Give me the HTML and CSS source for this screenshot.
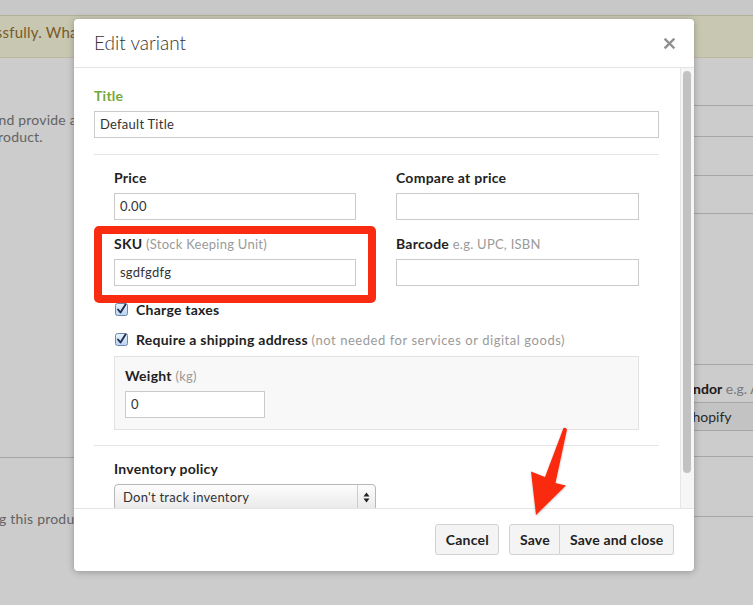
FILE: index.html
```html
<!DOCTYPE html>
<html lang="en">
<head>
<meta charset="utf-8">
<title>Edit variant</title>
<link rel="stylesheet" href="styles.css">
</head>
<body>
<div class="page">
  <div class="topstrip"></div>
  <div class="flash"><span class="flash-text">Your product was saved successfully. What's next?</span></div>
  <div class="layout">
    <div class="main">
      <div class="main-block">
        <p class="intro"><span class="intro-l1">Give your product a title and provide a</span><span class="intro-l2">product.</span></p>
      </div>
      <div class="main-block second">
        <p class="intro"><span class="intro-l3">Stop selling this product</span></p>
      </div>
    </div>
    <div class="sidebar">
      <div class="side-row h48"></div>
      <div class="side-row h30"></div>
      <div class="side-row h38"></div>
      <div class="side-row h37"></div>
      <div class="side-row h150"></div>
      <div class="side-row vendor">
        <div class="side-label"><b>Vendor</b> <span class="side-hint">e.g. Apple</span></div>
        <div class="side-input">Shopify</div>
      </div>
      <div class="side-row h59"></div>
    </div>
  </div>
</div>

<div class="backdrop"></div>

<div class="modal">
  <div class="modal-header">
    <h2 class="modal-title">Edit variant</h2>
    <span class="close" aria-label="Close">
      <svg width="11" height="11" viewBox="0 0 11 11"><path d="M1.5 1.5 L9.5 9.5 M9.5 1.5 L1.5 9.5" stroke="#8f8f8f" stroke-width="2.4" stroke-linecap="square"/></svg>
    </span>
  </div>
  <div class="modal-body">
    <div class="modal-content">
      <div class="field">
        <label class="label green">Title</label>
        <div class="input">Default Title</div>
      </div>
      <hr class="rule first">
      <div class="section">
        <div class="grid">
          <div class="field">
            <label class="label">Price</label>
            <div class="input">0.00</div>
          </div>
          <div class="field">
            <label class="label">Compare at price</label>
            <div class="input"></div>
          </div>
          <div class="field marked">
            <label class="label">SKU <span class="hint">(Stock Keeping Unit)</span></label>
            <div class="input">sgdfgdfg</div>
            <span class="mark"></span>
          </div>
          <div class="field">
            <label class="label">Barcode <span class="hint">e.g. UPC, ISBN</span></label>
            <div class="input"></div>
          </div>
        </div>
        <div class="check-row first">
          <svg class="checkbox" width="13" height="13" viewBox="0 0 13 13"><defs><linearGradient id="cb1" x1="0" y1="0" x2="0" y2="1"><stop offset="0" stop-color="#e9f2fd"/><stop offset="1" stop-color="#b9d3f2"/></linearGradient></defs><rect x="0.5" y="0.5" width="12" height="12" rx="2" fill="url(#cb1)" stroke="#6f88a8"/><path d="M3 6.5 L5.5 9.5 L10.5 1.5" fill="none" stroke="#1f2f4d" stroke-width="1.9" stroke-linecap="round" stroke-linejoin="round"/></svg>
          <span class="check-text">Charge taxes</span>
        </div>
        <div class="check-row">
          <svg class="checkbox" width="13" height="13" viewBox="0 0 13 13"><defs><linearGradient id="cb2" x1="0" y1="0" x2="0" y2="1"><stop offset="0" stop-color="#e9f2fd"/><stop offset="1" stop-color="#b9d3f2"/></linearGradient></defs><rect x="0.5" y="0.5" width="12" height="12" rx="2" fill="url(#cb2)" stroke="#6f88a8"/><path d="M3 6.5 L5.5 9.5 L10.5 1.5" fill="none" stroke="#1f2f4d" stroke-width="1.9" stroke-linecap="round" stroke-linejoin="round"/></svg>
          <span class="check-text">Require a shipping address <span class="hint wide">(not needed for services or digital goods)</span></span>
        </div>
        <div class="weight-box">
          <label class="label">Weight <span class="hint">(kg)</span></label>
          <div class="input small">0</div>
        </div>
      </div>
      <hr class="rule">
      <div class="section">
        <label class="label">Inventory policy</label>
        <div class="select">
          <span class="select-value">Don't track inventory</span>
          <span class="select-arrows">
            <svg width="7" height="11" viewBox="0 0 7 11"><path d="M3.5 0.5 L6.5 4.5 L0.5 4.5 Z M0.5 6.5 L6.5 6.5 L3.5 10.5 Z" fill="#222"/></svg>
          </span>
        </div>
      </div>
    </div>
    <div class="scrollbar"><div class="scrollbar-thumb"></div></div>
  </div>
  <div class="modal-footer">
    <button class="btn">Cancel</button>
    <div class="btn-group">
      <button class="btn">Save</button>
      <button class="btn">Save and close</button>
    </div>
  </div>
</div>

<svg class="pointer" width="50" height="100" viewBox="0 0 50 100">
  <defs>
    <filter id="soft" x="-20%" y="-20%" width="140%" height="140%">
      <feDropShadow dx="0" dy="1" stdDeviation="1" flood-color="#000" flood-opacity="0.25"/>
    </filter>
  </defs>
  <path d="M38.5 6 Q41 5 42 7.5 L30.5 61 L41 63.5 L11 93 L6 49.5 L20 55 Z" fill="#f92b10" filter="url(#soft)"/>
</svg>
</body>
</html>
```

FILE: styles.css
```css
* { box-sizing: border-box; }

html, body {
  margin: 0;
  padding: 0;
}

body {
  width: 753px;
  height: 605px;
  overflow: hidden;
  position: relative;
  font-family: "Lato", "Liberation Sans", sans-serif;
  font-size: 13px;
  color: #333;
  background: #fff;
}

/* ---------- page underneath the dialog ---------- */
.topstrip {
  height: 16px;
  background: #fbfbfb;
  border-bottom: 1px solid #e0ddc0;
}

.flash {
  height: 42px;
  background: #fbfbdf;
  border-bottom: 1px solid #ebe7c6;
  padding-top: 7px;
  white-space: nowrap;
  overflow: hidden;
}

.flash-text {
  display: block;
  margin-left: -206px;
  font-size: 15px;
  line-height: 18px;
  letter-spacing: 0.2px;
  color: #99712f;
}

.layout {
  display: flex;
  width: 960px;
}

.main {
  width: 660px;
  flex: none;
  overflow: hidden;
}

.main-block {
  height: 400px;
  border-bottom: 1px solid #cfcfcf;
}

.main-block.second {
  height: 120px;
  padding-top: 52px;
  border-bottom: 0;
}

.intro {
  margin: 0;
  padding-top: 53px;
  font-size: 14px;
  line-height: 17px;
  letter-spacing: 0.2px;
  color: #7c7c7c;
  white-space: nowrap;
}

.main-block.second .intro { padding-top: 0; }

.intro-l1 { display: block; margin-left: -166px; }
.intro-l2 { display: block; margin-left: -10px; }
.intro-l3 { display: block; margin-left: -66px; }

.sidebar {
  width: 300px;
  flex: none;
}

.side-row { border-bottom: 1px solid #d0d0d0; }
.side-row.h48 { height: 48px; }
.side-row.h30 { height: 31px; }
.side-row.h38 { height: 39px; }
.side-row.h37 { height: 38px; }
.side-row.h150 { height: 151px; }
.side-row.h59 { height: 60px; }

.side-row.vendor {
  height: 92px;
  padding: 16px 0 0 17px;
}

.side-label {
  font-size: 14px;
  line-height: 16px;
  color: #222;
  margin-bottom: 5px;
  white-space: nowrap;
}

.side-label b { font-weight: 700; }
.side-hint { color: #9a9a9a; }

.side-input {
  width: 260px;
  height: 29px;
  border-top: 1px solid #d0d0d0;
  border-bottom: 1px solid #d0d0d0;
  padding: 5px 8px;
  font-size: 14px;
  color: #333;
  line-height: 17px;
  background: #f4f4f4;
}

.backdrop {
  position: absolute;
  inset: 0;
  background: rgba(0, 0, 0, 0.2);
}

/* ---------- dialog ---------- */
.modal {
  position: absolute;
  left: 74px;
  top: 19px;
  width: 620px;
  height: 552px;
  background: #fff;
  border-radius: 4px;
  box-shadow: 0 1px 7px rgba(0, 0, 0, 0.28);
  display: flex;
  flex-direction: column;
  overflow: hidden;
  letter-spacing: 0.25px;
}

.modal-header {
  height: 49px;
  flex: none;
  display: flex;
  align-items: center;
  justify-content: space-between;
  padding: 0 19px 0 20px;
  border-bottom: 1px solid #e4e4e4;
}

.modal-title {
  margin: 0;
  font-size: 19px;
  font-weight: 300;
  color: #333;
  line-height: 24px;
  letter-spacing: 0;
}

.close {
  display: flex;
  width: 11px;
  height: 11px;
}

.modal-body {
  height: 440px;
  flex: none;
  display: flex;
}

.modal-content {
  flex: 1;
  padding: 20px 21px 0 20px;
  overflow: hidden;
}

.scrollbar {
  width: 14px;
  flex: none;
  background: #f6f6f6;
  border-left: 1px solid #e6e6e6;
  padding: 3px 3px 0 2px;
}

.scrollbar-thumb {
  height: 402px;
  border-radius: 4px;
  background: #c2c2c2;
}

.field { display: flex; flex-direction: column; }

.label {
  display: block;
  font-size: 14px;
  font-weight: 700;
  line-height: 16px;
  margin-bottom: 7px;
  color: #222;
  white-space: nowrap;
}

.label.green { color: #74a83a; }

.hint {
  font-size: 13px;
  font-weight: 400;
  color: #9a9a9a;
}

.hint.wide { letter-spacing: 0.55px; }

.input {
  height: 27px;
  border: 1px solid #cacaca;
  padding: 0 5px;
  line-height: 25px;
  color: #333;
  background: #fff;
}

.input.small { width: 140px; }

.rule {
  border: 0;
  border-top: 1px solid #e4e4e4;
  margin: 0;
}

.rule.first { margin-top: 16px; }

.section { padding: 15px 20px; }

.grid {
  display: grid;
  grid-template-columns: 242px 243px;
  column-gap: 40px;
  row-gap: 16px;
}

.field.marked { position: relative; }

.mark {
  position: absolute;
  top: -10px;
  left: -20px;
  right: -20px;
  bottom: -17px;
  border: 8px solid #f92b10;
  border-radius: 5px;
}

.check-row {
  display: flex;
  align-items: center;
  gap: 8px;
  height: 18px;
  margin-top: 12px;
  padding-left: 1px;
}

.check-row.first { margin-top: 14px; }

.check-text {
  font-size: 14px;
  font-weight: 700;
  color: #222;
  white-space: nowrap;
}

.weight-box {
  margin-top: 8px;
  background: #f8f8f8;
  border: 1px solid #e2e2e2;
  padding: 11px 10px 11px 10px;
}

.select {
  width: 262px;
  height: 27px;
  display: flex;
  align-items: stretch;
  border: 1px solid #b7b7b7;
  border-radius: 4px;
  background: linear-gradient(#fdfdfd, #e9e9e9);
}

.select-value {
  flex: 1;
  padding-left: 8px;
  line-height: 25px;
  color: #333;
}

.select-arrows {
  width: 18px;
  border-left: 1px solid #cdcdcd;
  display: flex;
  align-items: center;
  justify-content: center;
}

.modal-footer {
  height: 63px;
  flex: none;
  border-top: 1px solid #e4e4e4;
  display: flex;
  justify-content: flex-end;
  align-items: flex-start;
  gap: 10px;
  padding: 15px 20px 0 0;
}

.btn {
  height: 31px;
  padding: 0 9.5px;
  font-family: inherit;
  font-size: 14px;
  font-weight: 700;
  letter-spacing: 0.2px;
  color: #222;
  background: #f4f4f4;
  border: 1px solid #d2d2d2;
  border-radius: 3px;
}

.btn-group { display: flex; }
.btn-group .btn:first-child { border-radius: 3px 0 0 3px; }
.btn-group .btn:last-child { border-radius: 0 3px 3px 0; border-left: 0; }

.pointer {
  position: absolute;
  left: 525px;
  top: 422px;
}
```
